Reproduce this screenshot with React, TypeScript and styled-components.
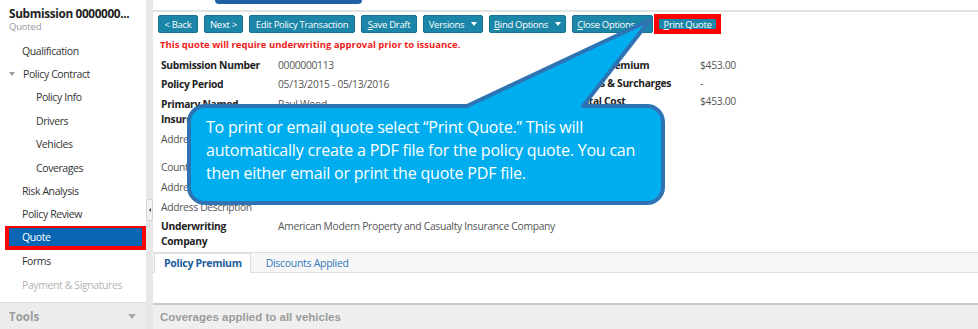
import * as React from "react";
import styled, { createGlobalStyle } from "styled-components";

const GlobalStyle = createGlobalStyle`
  html, body {
    margin: 0;
    padding: 0;
    background: #fff;
  }
  body {
    font-family: "Open Sans", "Noto Sans", sans-serif;
  }
`;

const Page = styled.div`
  position: relative;
  display: flex;
  width: 978px;
  height: 329px;
  overflow: hidden;
  background: #fff;
  color: #333;
`;

/* ---------- sidebar ---------- */

const Sidebar = styled.nav`
  width: 146px;
  flex-shrink: 0;
  display: flex;
  flex-direction: column;
`;

const SideHeader = styled.div`
  height: 39px;
  box-sizing: border-box;
  padding: 6px 0 0 9px;
`;

const SubmissionTitle = styled.div`
  font-size: 11.8px;
  font-weight: 700;
  letter-spacing: -0.35px;
  line-height: 15px;
  color: #222;
  white-space: nowrap;
`;

const Status = styled.div`
  font-size: 9.5px;
  line-height: 12px;
  color: #999;
  letter-spacing: -0.2px;
`;

const NavItem = styled.div<{ $level?: number; $active?: boolean; $disabled?: boolean }>`
  height: 23.4px;
  box-sizing: border-box;
  display: flex;
  align-items: center;
  font-size: 10.5px;
  letter-spacing: -0.4px;
  white-space: nowrap;
  padding-left: ${(p) => (p.$level === 1 ? 36 : 22)}px;
  color: ${(p) => (p.$disabled ? "#b5b5b5" : p.$active ? "#fff" : "#333")};
  ${(p) =>
    p.$active &&
    `
    margin-left: 5px;
    padding-left: 13px;
    background: #0a66b2;
    border: 4px solid #ff0000;
    border-top-width: 2px;
  `}
`;

const CaretItem = styled(NavItem)`
  padding-left: 9px;
`;

const NavCaret = styled.span`
  width: 0;
  height: 0;
  margin-right: 8px;
  border-left: 3px solid transparent;
  border-right: 3px solid transparent;
  border-top: 4px solid #9a9a9a;
`;

const ToolsBar = styled.div`
  margin-top: auto;
  height: 27px;
  box-sizing: border-box;
  display: flex;
  align-items: center;
  justify-content: space-between;
  padding: 0 10px 0 9px;
  background: #ececec;
  border-top: 1px solid #dcdcdc;
  font-size: 11.5px;
  font-weight: 700;
  color: #9c9c9c;
`;

const ToolsCaret = styled.span`
  width: 0;
  height: 0;
  border-left: 4px solid transparent;
  border-right: 4px solid transparent;
  border-top: 5px solid #a8a8a8;
`;

/* ---------- splitter ---------- */

const Splitter = styled.div`
  width: 7px;
  flex-shrink: 0;
  background: #e7e7e7;
  display: flex;
  flex-direction: column;
  align-items: center;
`;

const SplitterHandle = styled.div`
  margin-top: 199px;
  width: 5px;
  height: 20px;
  background: #f2f2f2;
  border: 1px solid #d6d6d6;
  border-radius: 2px;
  display: flex;
  align-items: center;
  justify-content: center;
  &::before {
    content: "";
    border-top: 2px solid transparent;
    border-bottom: 2px solid transparent;
    border-right: 2px solid #333;
  }
`;

/* ---------- main ---------- */

const Main = styled.main`
  flex: 1;
  min-width: 0;
  display: flex;
  flex-direction: column;
`;

const TopStrip = styled.div`
  height: 10px;
  border-bottom: 2px solid #e3e3e3;
`;

const ScreenTab = styled.div`
  margin-left: 62px;
  width: 147px;
  height: 4px;
  background: #1f5fa6;
  border-radius: 0 0 4px 4px;
`;

const Toolbar = styled.div`
  margin-top: 2px;
  height: 20px;
  padding-left: 5px;
  display: flex;
  align-items: center;
  gap: 6px;
`;

const Button = styled.div<{ $w: number }>`
  width: ${(p) => p.$w}px;
  height: 18px;
  box-sizing: border-box;
  display: flex;
  align-items: center;
  justify-content: center;
  background: #1b86a8;
  border: 1px solid #157291;
  border-radius: 2px;
  color: #fff;
  font-size: 9.5px;
  letter-spacing: -0.3px;
  white-space: nowrap;
  u {
    text-decoration: underline;
    text-underline-offset: 1px;
  }
`;

const BtnCaret = styled.span`
  margin-left: 7px;
  width: 0;
  height: 0;
  border-left: 3.5px solid transparent;
  border-right: 3.5px solid transparent;
  border-top: 4px solid #fff;
`;

const HighlightBox = styled.div`
  margin-left: -5px;
  width: 67px;
  height: 20px;
  box-sizing: border-box;
  border: 5px solid #ff0000;
  background: #1b86a8;
  display: flex;
  align-items: center;
  justify-content: center;
  color: #fff;
  font-size: 9.5px;
  letter-spacing: -0.3px;
  white-space: nowrap;
  u {
    text-decoration: underline;
    text-underline-offset: 1px;
  }
`;

const Warning = styled.div`
  margin-top: 4px;
  padding-left: 7px;
  height: 14px;
  line-height: 14px;
  font-size: 9.5px;
  font-weight: 700;
  letter-spacing: 0;
  color: #ee1c1c;
  white-space: nowrap;
`;

const Details = styled.div`
  margin-top: 5.5px;
  padding-left: 8px;
  display: flex;
  align-items: flex-start;
`;

const FieldGrid = styled.div<{ $label: number; $gap: number; $width?: number }>`
  display: grid;
  grid-template-columns: ${(p) => p.$label}px auto;
  row-gap: ${(p) => p.$gap}px;
  width: ${(p) => (p.$width ? `${p.$width}px` : "auto")};
  font-size: 10.3px;
  line-height: 15px;
  letter-spacing: -0.3px;
`;

const Label = styled.div<{ $bold?: boolean; $tall?: boolean }>`
  font-weight: ${(p) => (p.$bold ? 700 : 400)};
  color: ${(p) => (p.$bold ? "#222" : "#555")};
  padding-bottom: ${(p) => (p.$tall ? 9 : 0)}px;
`;

const Value = styled.div`
  color: #555;
  white-space: nowrap;
`;

const Tabs = styled.div`
  margin-top: 2.5px;
  height: 21px;
  box-sizing: border-box;
  display: flex;
  align-items: stretch;
  padding-left: 1px;
  background: #f7f7f7;
  border-top: 1px solid #dedede;
  border-bottom: 1px solid #dedede;
`;

const Tab = styled.div<{ $active?: boolean }>`
  display: flex;
  align-items: center;
  padding: 0 ${(p) => (p.$active ? "8px 0 9px" : "14px")};
  margin-bottom: ${(p) => (p.$active ? -1 : 0)}px;
  background: ${(p) => (p.$active ? "#fff" : "transparent")};
  border: 1px solid ${(p) => (p.$active ? "#dedede" : "transparent")};
  border-bottom: none;
  font-size: 10.5px;
  letter-spacing: -0.3px;
  font-weight: ${(p) => (p.$active ? 700 : 400)};
  color: ${(p) => (p.$active ? "#1b5c9c" : "#3277b8")};
  white-space: nowrap;
`;

const BottomBar = styled.div`
  margin-top: auto;
  height: 26px;
  box-sizing: border-box;
  padding: 6px 0 0 7px;
  background: #efefef;
  border-top: 2px solid #c9c9c9;
  font-family: "Liberation Sans", Arial, sans-serif;
  font-size: 11.5px;
  font-weight: 700;
  color: #9b9b9b;
  white-space: nowrap;
`;

/* ---------- callout overlay ---------- */

const CalloutShape = styled.svg`
  position: absolute;
  left: 0;
  top: 0;
  pointer-events: none;
`;

const CalloutText = styled.div`
  position: absolute;
  left: 206px;
  top: 115.5px;
  width: 445px;
  font-size: 16px;
  line-height: 23px;
  letter-spacing: -0.2px;
  color: #fff;
`;

const Callout = () => (
  <>
    <CalloutShape width={978} height={329} viewBox="0 0 978 329">
      <path
        d="M205,106 L467,106 L650,20 L583,106 L647,106 A16,16 0 0 1 663,122 L663,187 A16,16 0 0 1 647,203 L205,203 A16,16 0 0 1 189,187 L189,122 A16,16 0 0 1 205,106 Z"
        fill="#00aeef"
        stroke="#2e74b5"
        strokeWidth={4}
        strokeLinejoin="round"
      />
    </CalloutShape>
    <CalloutText>
      To print or email quote select “Print Quote.” This will automatically
      create a PDF file for the policy quote. You can then either email or
      print the quote PDF file.
    </CalloutText>
  </>
);

export default function App() {
  return (
    <Page>
      <GlobalStyle />
      <Sidebar>
        <SideHeader>
          <SubmissionTitle>Submission 0000000...</SubmissionTitle>
          <Status>Quoted</Status>
        </SideHeader>
        <NavItem>Qualification</NavItem>
        <CaretItem>
          <NavCaret />
          Policy Contract
        </CaretItem>
        <NavItem $level={1}>Policy Info</NavItem>
        <NavItem $level={1}>Drivers</NavItem>
        <NavItem $level={1}>Vehicles</NavItem>
        <NavItem $level={1}>Coverages</NavItem>
        <NavItem>Risk Analysis</NavItem>
        <NavItem>Policy Review</NavItem>
        <NavItem $active>Quote</NavItem>
        <NavItem>Forms</NavItem>
        <NavItem $disabled>Payment &amp; Signatures</NavItem>
        <ToolsBar>
          Tools
          <ToolsCaret />
        </ToolsBar>
      </Sidebar>

      <Splitter>
        <SplitterHandle />
      </Splitter>

      <Main>
        <TopStrip>
          <ScreenTab />
        </TopStrip>
        <Toolbar>
          <Button $w={40}>&lt; Back</Button>
          <Button $w={39}>Next &gt;</Button>
          <Button $w={106}>Edit Policy Transaction</Button>
          <Button $w={56}>
            <u>S</u>ave Draft
          </Button>
          <Button $w={60}>
            Versions
            <BtnCaret />
          </Button>
          <Button $w={77}>
            <u>B</u>ind Options
            <BtnCaret />
          </Button>
          <Button $w={81}>
            <u>C</u>lose Options
            <BtnCaret />
          </Button>
          <HighlightBox>
            <u>P</u>rint Quote
          </HighlightBox>
        </Toolbar>
        <Warning>This quote will require underwriting approval prior to issuance.</Warning>

        <Details>
          <FieldGrid $label={117} $gap={4.7} $width={416}>
            <Label $bold>Submission Number</Label>
            <Value>0000000113</Value>
            <Label $bold>Policy Period</Label>
            <Value>05/13/2015 - 05/13/2016</Value>
            <Label $bold>
              Primary Named
              <br />
              Insured
            </Label>
            <Value>Paul Wood</Value>
            <Label $tall>Address</Label>
            <Value />
            <Label>County</Label>
            <Value />
            <Label>Address</Label>
            <Value />
            <Label>Address Description</Label>
            <Value />
            <Label $bold>
              Underwriting
              <br />
              Company
            </Label>
            <Value>American Modern Property and Casualty Insurance Company</Value>
          </FieldGrid>
          <FieldGrid $label={123} $gap={3}>
            <Label $bold>Total Premium</Label>
            <Value>$453.00</Value>
            <Label $bold>Taxes &amp; Surcharges</Label>
            <Value>-</Value>
            <Label $bold>Total Cost</Label>
            <Value>$453.00</Value>
          </FieldGrid>
        </Details>

        <Tabs>
          <Tab $active>Policy Premium</Tab>
          <Tab>Discounts Applied</Tab>
        </Tabs>

        <BottomBar>Coverages applied to all vehicles</BottomBar>
      </Main>

      <Callout />
    </Page>
  );
}
